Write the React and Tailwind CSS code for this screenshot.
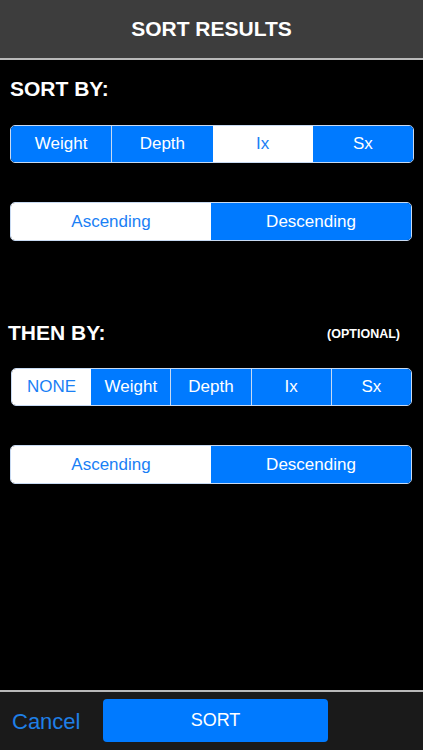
import React from 'react';

const FONT = { fontFamily: '"Liberation Sans", Arial, sans-serif' };

const Segmented = ({ items, selected, className = '' }) => (
    <div className={`flex h-[38px] overflow-hidden rounded-[5px] border border-[#c8daf2] ${className}`}>
        {items.map((item, i) => {
            const active = i === selected;
            const prevActive = i - 1 === selected;
            return (
                <div
                    key={item}
                    className={`flex flex-1 items-center justify-center text-[17px] ${
                        active ? 'bg-white text-[#1a7ff5]' : 'bg-[#007aff] text-white'
                    } ${i > 0 && !active && !prevActive ? 'border-l border-[#c8daf2]' : ''}`}
                >
                    {item}
                </div>
            );
        })}
    </div>
);

const Order = ({ className = '' }) => (
    <div className={`flex h-[39px] overflow-hidden rounded-[5px] border border-[#c8daf2] ${className}`}>
        <div className="flex flex-1 items-center justify-center bg-white text-[17px] text-[#1a7ff5]">Ascending</div>
        <div className="flex flex-1 items-center justify-center bg-[#007aff] text-[17px] text-white">Descending</div>
    </div>
);

export default function App() {
    return (
        <div style={FONT} className="flex h-[750px] w-[423px] flex-col overflow-hidden bg-black">
            <div className="flex h-[60px] items-center justify-center border-b-2 border-[#b9b9b9] bg-[#3d3d3d]">
                <h1 className="text-[21px] font-bold text-white">SORT RESULTS</h1>
            </div>

            <div className="px-[10px]">
                <p className="mt-[17px] h-[24px] text-[21px] font-bold leading-[24px] text-white">SORT BY:</p>
                <Segmented className="mt-[24px] w-[404px]" items={['Weight', 'Depth', 'Ix', 'Sx']} selected={2} />
                <Order className="mt-[39px] w-[402px]" />

                <div className="mt-[80px] flex h-[24px] items-center justify-between">
                    <p className="-ml-[2px] text-[21px] font-bold leading-[24px] text-white">THEN BY:</p>
                    <p className="mr-[13px] mt-[3px] text-[12.5px] font-bold text-white">(OPTIONAL)</p>
                </div>
                <Segmented
                    className="ml-[1px] mt-[23px] w-[401px]"
                    items={['NONE', 'Weight', 'Depth', 'Ix', 'Sx']}
                    selected={0}
                />
                <Order className="mt-[39px] w-[402px]" />
            </div>

            <div className="mt-auto flex h-[60px] items-start border-t-2 border-[#b9b9b9] bg-[#1a1a1a] pt-[7px]">
                <span className="ml-[12px] mt-[6px] w-[91px] text-[22px] text-[#1f7fe6]">Cancel</span>
                <button className="flex h-[43px] w-[225px] items-center justify-center rounded-[4px] bg-[#007aff] text-[18px] text-white">
                    SORT
                </button>
            </div>
        </div>
    );
}
